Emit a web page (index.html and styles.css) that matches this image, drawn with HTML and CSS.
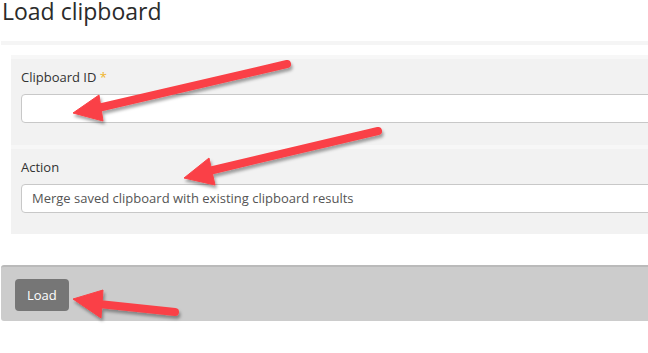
FILE: index.html
```html
<!DOCTYPE html>
<html>
<head>
<meta charset="utf-8">
<link rel="stylesheet" href="styles.css">
</head>
<body>
<div class="page">
  <h1 class="title">Load clipboard</h1>
  <form class="form-wrap">
    <div class="groups">
      <div class="group group-first">
        <label class="label">Clipboard ID <span class="req">*</span></label>
        <div class="input"></div>
      </div>
      <div class="group">
        <label class="label">Action</label>
        <div class="input select">Merge saved clipboard with existing clipboard results</div>
      </div>
    </div>
    <div class="footer">
      <button type="button" class="btn">Load</button>
    </div>
  </form>
  <svg class="arrows" width="648" height="353" viewBox="0 0 648 353">
    <defs>
      <filter id="sh" x="-20%" y="-50%" width="140%" height="200%">
        <feDropShadow dx="1.5" dy="3" stdDeviation="1.8" flood-color="#000" flood-opacity="0.35"/>
      </filter>
    </defs>
    <g fill="#fa4146" stroke="#fa4146" filter="url(#sh)">
      <line x1="287" y1="64" x2="98" y2="108" stroke-width="8" stroke-linecap="round"/>
      <polygon points="73,113 99,95 103,121" stroke-width="1" stroke-linejoin="round"/>
      <line x1="378" y1="131" x2="209" y2="171" stroke-width="8" stroke-linecap="round"/>
      <polygon points="184,178 209,158 215,185" stroke-width="1" stroke-linejoin="round"/>
      <line x1="175" y1="312" x2="99" y2="304" stroke-width="8" stroke-linecap="round"/>
      <polygon points="73,299 103,290 101,318" stroke-width="1" stroke-linejoin="round"/>
    </g>
  </svg>
</div>
</body>
</html>
```

FILE: styles.css
```css
html, body {
  margin: 0;
  padding: 0;
  background: #fff;
  overflow: hidden;
}
body {
  font-family: "Open Sans", "Liberation Sans", sans-serif;
  color: #333;
}
.page {
  position: relative;
  width: 720px;
  height: 353px;
}
.title {
  margin: 0;
  padding-left: 2px;
  font-size: 23px;
  line-height: 23px;
  font-weight: 400;
  color: #2b2b2b;
}
.form-wrap {
  margin: 18px 0 0 1px;
  border-top: 4px solid #f5f5f5;
}
.groups {
  padding: 10px 0 0 10px;
}
.group {
  background: #f2f2f2;
  border-top: 4px solid #f7f7f7;
  padding: 9px 0 21px 10px;
  display: flex;
  flex-direction: column;
  gap: 8px;
}
.group-first {
  padding-bottom: 22px;
}
.label {
  font-size: 13px;
  line-height: 18px;
  color: #333;
}
.req {
  color: #f0b429;
}
.input {
  height: 27px;
  background: #fff;
  border: 1px solid #c8c8c8;
  border-radius: 4px;
  box-sizing: content-box;
  font-size: 13px;
  line-height: 27px;
  color: #555;
  padding-left: 10px;
}
.footer {
  margin-top: 31px;
  background: #cccccc;
  border-top: 2px solid #bababa;
  border-radius: 3px 0 0 3px;
  padding: 12px 0 10px 14px;
}
.btn {
  display: block;
  height: 32px;
  padding: 0 12px;
  background: #767676;
  color: #fff;
  border: none;
  border-radius: 4px;
  font-family: "Open Sans", "Liberation Sans", sans-serif;
  font-size: 13px;
  line-height: 32px;
}
.arrows {
  position: absolute;
  left: 0;
  top: 0;
  pointer-events: none;
}
```
